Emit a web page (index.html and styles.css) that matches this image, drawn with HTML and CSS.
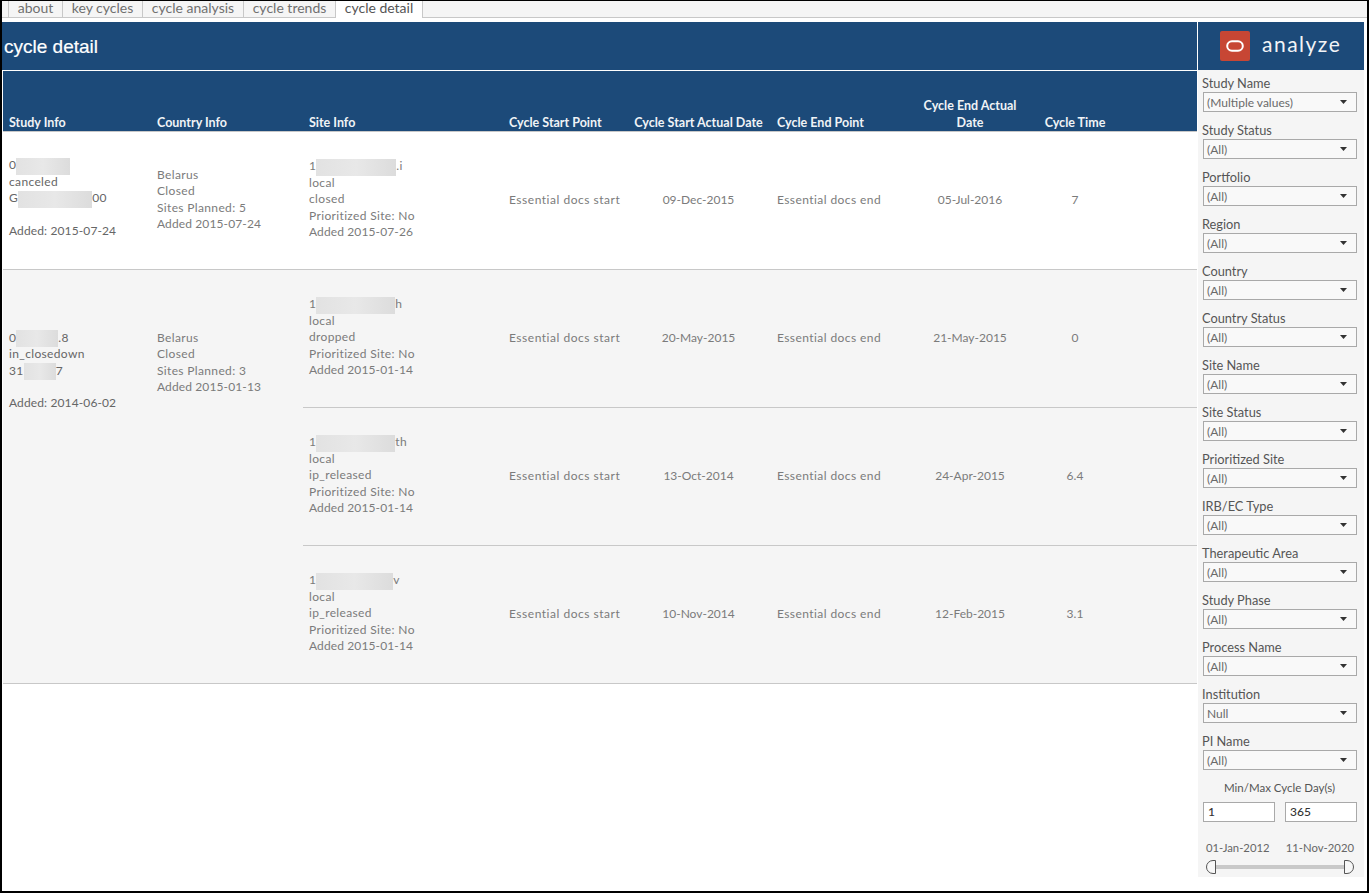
FILE: index.html
```html
<!DOCTYPE html>
<html lang="en">
<head>
<meta charset="utf-8">
<title>cycle detail</title>
<link rel="stylesheet" href="styles.css">
</head>
<body>
<div class="frame">
  <nav class="tabs">
    <span class="tab t1">about</span><span class="tab t2">key cycles</span><span class="tab t3">cycle analysis</span><span class="tab t4">cycle trends</span><span class="tab t5 active">cycle detail</span>
  </nav>
  <div class="main">
    <section class="content">
      <h1 class="title">cycle detail</h1>
      <div class="thead">
        <div class="th c-study">Study Info</div>
        <div class="th c-country">Country Info</div>
        <div class="th c-site">Site Info</div>
        <div class="th c-start">Cycle Start Point</div>
        <div class="th c-sdate ctr">Cycle Start Actual Date</div>
        <div class="th c-end">Cycle End Point</div>
        <div class="th c-edate ctr">Cycle End Actual<br>Date</div>
        <div class="th c-time ctr">Cycle Time</div>
      </div>

      <div class="group white">
        <div class="cell c-study pad-a dark">
          <div>0<span class="blur w54"></span></div>
          <div>canceled</div>
          <div>G<span class="blur w74"></span>00</div>
          <div class="blank"></div>
          <div class="added">Added: 2015-07-24</div>
        </div>
        <div class="cell c-country pad-b">
          <div>Belarus</div><div>Closed</div><div>Sites Planned: 5</div><div class="added">Added 2015-07-24</div>
        </div>
        <div class="sites">
          <div class="siterow">
            <div class="cell c-site"><div>1<span class="blur w82"></span>.i</div><div>local</div><div>closed</div><div>Prioritized Site: No</div><div class="added">Added 2015-07-26</div></div>
            <div class="cell c-start">Essential docs start</div>
            <div class="cell c-sdate ctr">09-Dec-2015</div>
            <div class="cell c-end">Essential docs end</div>
            <div class="cell c-edate ctr">05-Jul-2016</div>
            <div class="cell c-time ctr">7</div>
          </div>
        </div>
      </div>

      <div class="group grey">
        <div class="cell c-study pad-c dark">
          <div>0<span class="blur w42"></span>.8</div>
          <div>in_closedown</div>
          <div>31<span class="blur w32"></span>7</div>
          <div class="blank"></div>
          <div class="added">Added: 2014-06-02</div>
        </div>
        <div class="cell c-country pad-c">
          <div>Belarus</div><div>Closed</div><div>Sites Planned: 3</div><div class="added">Added 2015-01-13</div>
        </div>
        <div class="sites">
          <div class="siterow">
            <div class="cell c-site"><div>1<span class="blur w80"></span>h</div><div>local</div><div>dropped</div><div>Prioritized Site: No</div><div class="added">Added 2015-01-14</div></div>
            <div class="cell c-start">Essential docs start</div>
            <div class="cell c-sdate ctr">20-May-2015</div>
            <div class="cell c-end">Essential docs end</div>
            <div class="cell c-edate ctr">21-May-2015</div>
            <div class="cell c-time ctr">0</div>
          </div>
          <div class="siterow">
            <div class="cell c-site"><div>1<span class="blur w80"></span>th</div><div>local</div><div>ip_released</div><div>Prioritized Site: No</div><div class="added">Added 2015-01-14</div></div>
            <div class="cell c-start">Essential docs start</div>
            <div class="cell c-sdate ctr">13-Oct-2014</div>
            <div class="cell c-end">Essential docs end</div>
            <div class="cell c-edate ctr">24-Apr-2015</div>
            <div class="cell c-time ctr">6.4</div>
          </div>
          <div class="siterow">
            <div class="cell c-site"><div>1<span class="blur w78"></span>v</div><div>local</div><div>ip_released</div><div>Prioritized Site: No</div><div class="added">Added 2015-01-14</div></div>
            <div class="cell c-start">Essential docs start</div>
            <div class="cell c-sdate ctr">10-Nov-2014</div>
            <div class="cell c-end">Essential docs end</div>
            <div class="cell c-edate ctr">12-Feb-2015</div>
            <div class="cell c-time ctr">3.1</div>
          </div>
        </div>
      </div>
    </section>

    <aside class="side">
      <div class="brand">
        <span class="logo"><svg width="18" height="12" viewBox="0 0 18 12"><rect x="1.2" y="1.2" width="15.6" height="9.6" rx="4.8" fill="none" stroke="#fff" stroke-width="2"/></svg></span>
        <span class="analyze">analyze</span>
      </div>
      <div class="filters">
        <div class="filter"><label>Study Name</label><div class="select"><span>(Multiple values)</span><svg class="arrow" viewBox="0 0 7 4"><path d="M0 0h7L3.5 4z"/></svg></div></div>
        <div class="filter"><label>Study Status</label><div class="select"><span>(All)</span><svg class="arrow" viewBox="0 0 7 4"><path d="M0 0h7L3.5 4z"/></svg></div></div>
        <div class="filter"><label>Portfolio</label><div class="select"><span>(All)</span><svg class="arrow" viewBox="0 0 7 4"><path d="M0 0h7L3.5 4z"/></svg></div></div>
        <div class="filter"><label>Region</label><div class="select"><span>(All)</span><svg class="arrow" viewBox="0 0 7 4"><path d="M0 0h7L3.5 4z"/></svg></div></div>
        <div class="filter"><label>Country</label><div class="select"><span>(All)</span><svg class="arrow" viewBox="0 0 7 4"><path d="M0 0h7L3.5 4z"/></svg></div></div>
        <div class="filter"><label>Country Status</label><div class="select"><span>(All)</span><svg class="arrow" viewBox="0 0 7 4"><path d="M0 0h7L3.5 4z"/></svg></div></div>
        <div class="filter"><label>Site Name</label><div class="select"><span>(All)</span><svg class="arrow" viewBox="0 0 7 4"><path d="M0 0h7L3.5 4z"/></svg></div></div>
        <div class="filter"><label>Site Status</label><div class="select"><span>(All)</span><svg class="arrow" viewBox="0 0 7 4"><path d="M0 0h7L3.5 4z"/></svg></div></div>
        <div class="filter"><label>Prioritized Site</label><div class="select"><span>(All)</span><svg class="arrow" viewBox="0 0 7 4"><path d="M0 0h7L3.5 4z"/></svg></div></div>
        <div class="filter"><label>IRB/EC Type</label><div class="select"><span>(All)</span><svg class="arrow" viewBox="0 0 7 4"><path d="M0 0h7L3.5 4z"/></svg></div></div>
        <div class="filter"><label>Therapeutic Area</label><div class="select"><span>(All)</span><svg class="arrow" viewBox="0 0 7 4"><path d="M0 0h7L3.5 4z"/></svg></div></div>
        <div class="filter"><label>Study Phase</label><div class="select"><span>(All)</span><svg class="arrow" viewBox="0 0 7 4"><path d="M0 0h7L3.5 4z"/></svg></div></div>
        <div class="filter"><label>Process Name</label><div class="select"><span>(All)</span><svg class="arrow" viewBox="0 0 7 4"><path d="M0 0h7L3.5 4z"/></svg></div></div>
        <div class="filter"><label>Institution</label><div class="select"><span>Null</span><svg class="arrow" viewBox="0 0 7 4"><path d="M0 0h7L3.5 4z"/></svg></div></div>
        <div class="filter"><label>PI Name</label><div class="select"><span>(All)</span><svg class="arrow" viewBox="0 0 7 4"><path d="M0 0h7L3.5 4z"/></svg></div></div>
      </div>
      <div class="minmax">Min/Max Cycle Day(s)</div>
      <div class="inputs"><div class="num">1</div><div class="num">365</div></div>
      <div class="dates"><span>01-Jan-2012</span><span>11-Nov-2020</span></div>
      <div class="slider"><span class="handle left"></span><span class="track"></span><span class="handle right"></span></div>
    </aside>
  </div>
</div>
</body>
</html>
```
FILE: styles.css
```css
* { box-sizing: border-box; }
html, body { margin: 0; padding: 0; background: #fff; }
body { font-family: Lato, "Noto Sans", sans-serif; font-size: 12px; color: #7b7b7b; }
.frame {
  width: 1369px; height: 893px;
  border-style: solid; border-color: #000;
  border-width: 1px 2px 2px 2px;
  display: flex; flex-direction: column;
  overflow: hidden;
}
.tabs {
  height: 17px; flex: none;
  display: flex;
  background: #f5f5f5;
  border-bottom: 1px solid #c8c8c8;
  padding-left: 6px;
}
.tab {
  height: 16px; line-height: 13px;
  font-size: 14px; color: #707070;
  text-align: center;
  border-left: 1px solid #c8c8c8;
}
.t1 { width: 54px; }
.t2 { width: 80px; }
.t3 { width: 101px; }
.t4 { width: 92px; }
.t5 { width: 88px; }
.tab.active {
  height: 17px; background: #fff; color: #555;
  border-right: 1px solid #c8c8c8;
}
.main { flex: 1; display: flex; margin-top: 4px; min-height: 0; }
.content { width: 1195px; flex: none; }
.title {
  margin: 0; height: 49px;
  background: #1c4a79;
  border-bottom: 1px solid #fff;
  color: #fff;
  font: 400 19px/49px "Liberation Sans", Arial, sans-serif;
  padding-left: 2px;
  -webkit-text-stroke: 0.2px #fff;
}
.thead {
  height: 61px; margin-left: 1px;
  display: flex; align-items: flex-end;
  background: #1c4a79;
  border-bottom: 1px solid #c8c8c8;
}
.th {
  color: #f0f3f6; font-weight: 700; font-size: 12.5px;
  line-height: 16.5px;
}
.group { display: flex; margin-left: 1px; border-bottom: 1px solid #c8c8c8; }
.white { background: #fff; height: 138px; }
.grey { background: #f5f5f5; height: 414px; }
.cell { line-height: 16.4px; letter-spacing: 0.35px; }
.added { letter-spacing: 0.12px; }
.dark { color: #666; }
.blank { height: 16px; }
.c-study { width: 148px; padding-left: 6px; flex: none; }
.c-country { width: 152px; padding-left: 6px; flex: none; }
.c-site { width: 200px; padding-left: 6px; flex: none; }
.c-start { width: 124px; padding-left: 6px; flex: none; white-space: nowrap; }
.c-sdate { width: 143px; flex: none; white-space: nowrap; }
.c-end { width: 146px; padding-left: 7px; flex: none; white-space: nowrap; }
.c-edate { width: 108px; flex: none; }
.c-time { width: 102px; flex: none; }
.ctr { text-align: center; }
.cell.ctr { letter-spacing: 0; }
.cell.c-start { letter-spacing: 0.52px; }
.cell.c-end { letter-spacing: 0.42px; }
.cell.c-site { margin-top: -1px; }
.pad-a { padding-top: 25.4px; }
.pad-b { padding-top: 35px; }
.pad-c { padding-top: 60px; }
.sites { flex: 1; display: flex; flex-direction: column; }
.siterow {
  flex: 1; display: flex; align-items: center;
  border-bottom: 1px solid #c8c8c8;
  padding-bottom: 1px;
}
.siterow:last-child { border-bottom: 0; }
.blur {
  display: inline-block; height: 17px; vertical-align: middle;
  margin-top: -3px; margin-bottom: -3px;
  background: linear-gradient(90deg, #e2e2e2, #e8e8e8 50%, #dcdcdc);
}
.w54 { width: 54px; }
.w74 { width: 74px; }
.w82 { width: 80px; }
.w42 { width: 42px; }
.w32 { width: 32px; }
.w80 { width: 79px; }
.w78 { width: 77px; }

.side { width: 166px; margin-left: 1px; height: 855px; flex: none; background: #f5f5f5; }
.brand {
  height: 48px; background: #1c4a79;
  display: flex; align-items: center;
  padding-left: 22px;
}
.logo {
  width: 30px; height: 30px; border-radius: 2px;
  background: #c74634;
  display: flex; align-items: center; justify-content: center;
}
.analyze {
  margin-left: 12px; color: #f2f4f7;
  font-size: 21px; letter-spacing: 1.5px; line-height: 24px;
  padding-bottom: 4px;
}
.filters { padding: 5px 7px 0 5px; }
.filter { height: 47px; }
.filter label {
  display: block; height: 17px; line-height: 17px;
  color: #555; font-size: 12.8px;
  margin-left: -1px;
}
.select {
  height: 20px; width: 154px;
  background: #f9f9f9; border: 1px solid #a9a9a9;
  display: flex; align-items: center; justify-content: space-between;
  padding: 0 9px 0 3px;
  font-size: 12px; color: #6a6a6a;
}
.arrow { width: 7px; height: 4px; fill: #333; }
.minmax { text-align: center; line-height: 16px; font-size: 11.5px; color: #555; padding-right: 3px; }
.inputs { display: flex; justify-content: space-between; padding: 6px 7px 0 5px; }
.num {
  width: 72px; height: 20px;
  background: #fff; border: 1px solid #a9a9a9;
  font-size: 12px; line-height: 18px; color: #333; padding-left: 4px;
  font-weight: 500;
}
.dates {
  display: flex; justify-content: space-between;
  padding: 18px 10px 0 8px;
  font-size: 11.3px; line-height: 16px; color: #666;
}
.slider { display: flex; align-items: center; padding: 4px 10px 0 8px; height: 18px; }
.track { flex: 1; height: 4px; background: #c9c9c9; }
.handle { width: 10px; height: 14px; border: 1px solid #555; background: #f8f8f8; flex: none; }
.handle.left { border-radius: 7px 0 0 7px; }
.handle.right { border-radius: 0 7px 7px 0; }
```
